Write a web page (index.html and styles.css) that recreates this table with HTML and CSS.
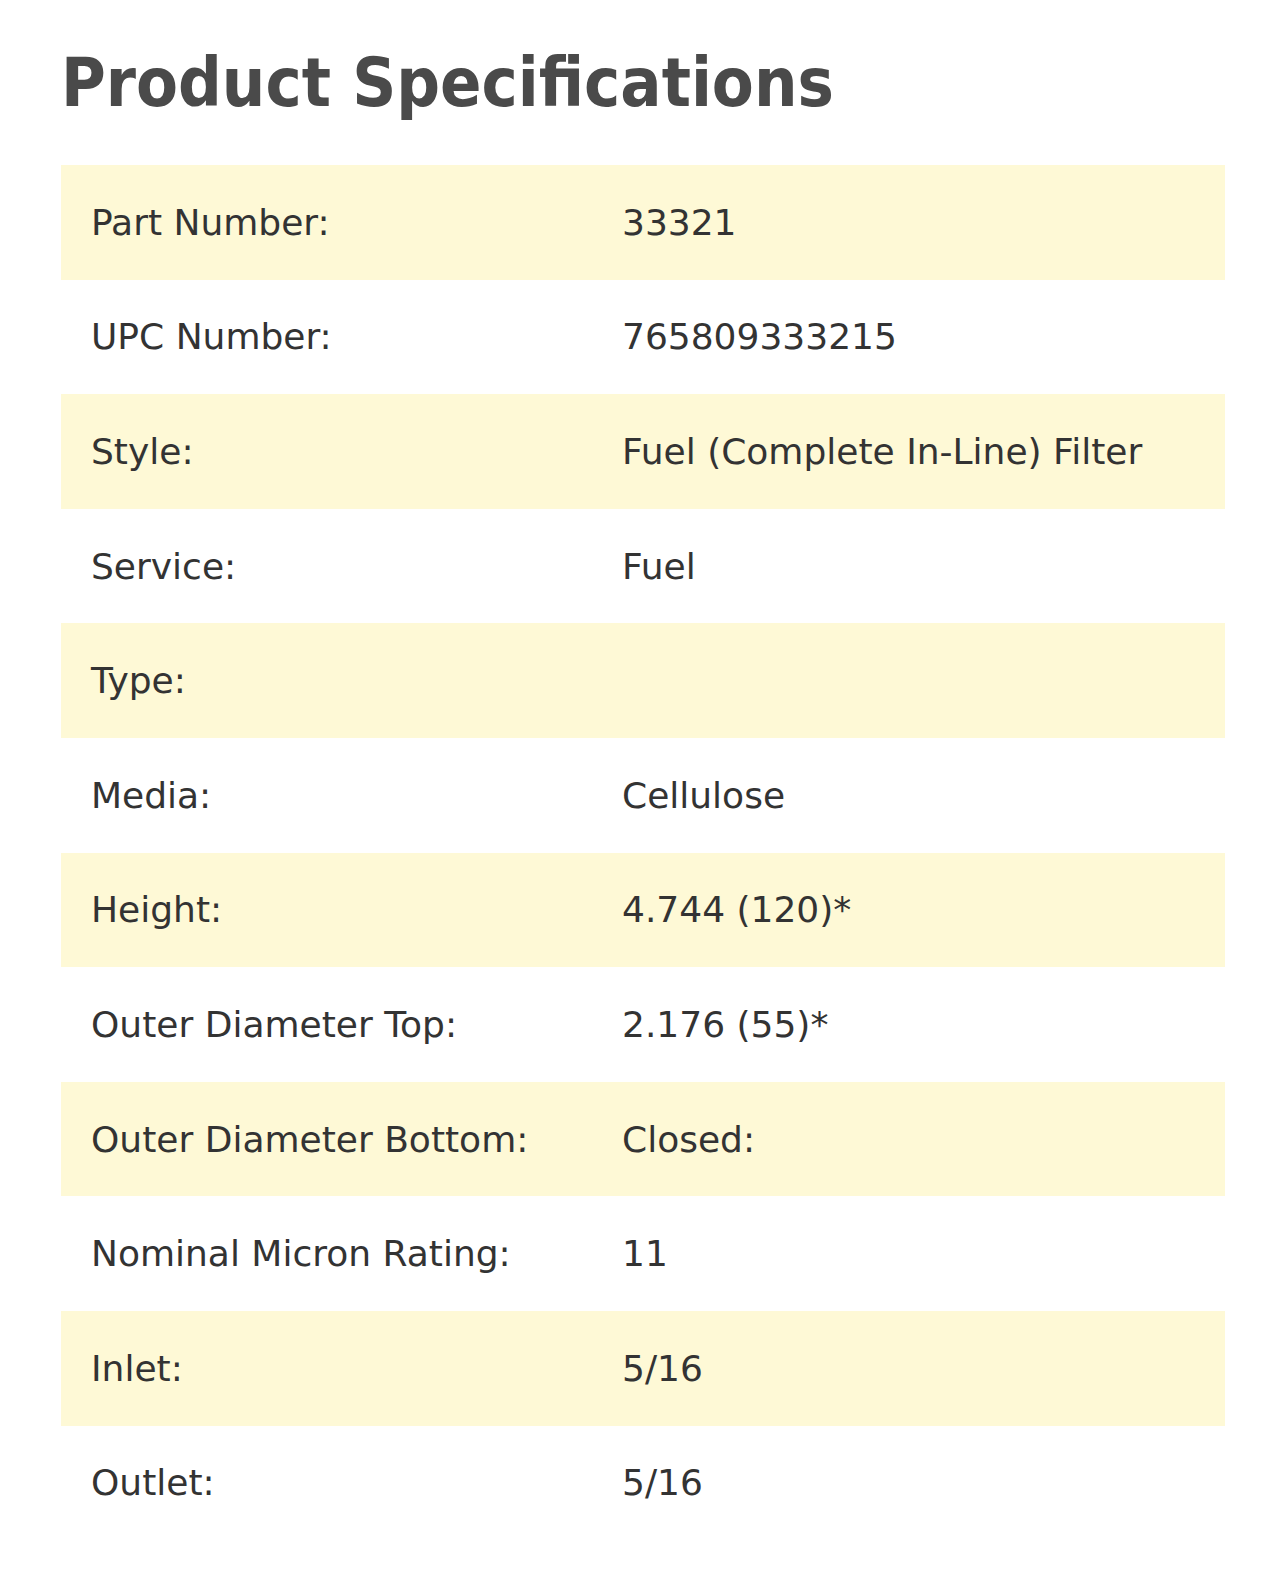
FILE: index.html
```html
<!DOCTYPE html>
<html>
<head>
<meta charset="utf-8">
<link rel="stylesheet" href="styles.css">
</head>
<body>
<section class="specs">
  <h1 class="title">Product Specifications</h1>
  <div class="table">
    <div class="row alt"><div class="label">Part Number:</div><div class="value">33321</div></div>
    <div class="row"><div class="label">UPC Number:</div><div class="value">765809333215</div></div>
    <div class="row alt"><div class="label">Style:</div><div class="value">Fuel (Complete In-Line) Filter</div></div>
    <div class="row"><div class="label">Service:</div><div class="value">Fuel</div></div>
    <div class="row alt"><div class="label">Type:</div><div class="value"></div></div>
    <div class="row"><div class="label">Media:</div><div class="value">Cellulose</div></div>
    <div class="row alt"><div class="label">Height:</div><div class="value">4.744 (120)*</div></div>
    <div class="row"><div class="label">Outer Diameter Top:</div><div class="value">2.176 (55)*</div></div>
    <div class="row alt"><div class="label">Outer Diameter Bottom:</div><div class="value">Closed:</div></div>
    <div class="row"><div class="label">Nominal Micron Rating:</div><div class="value">11</div></div>
    <div class="row alt"><div class="label">Inlet:</div><div class="value">5/16</div></div>
    <div class="row"><div class="label">Outlet:</div><div class="value">5/16</div></div>
  </div>
</section>
</body>
</html>
```

FILE: styles.css
```css
html, body {
  margin: 0;
  padding: 0;
  background: #ffffff;
}
.specs {
  padding: 38px 60px 0 61px;
  width: 1164px;
  font-family: "DejaVu Sans", Verdana, sans-serif;
}
.title {
  margin: 0 0 37px 0;
  font-family: "DejaVu Sans", sans-serif;
  font-stretch: condensed;
  font-weight: bold;
  font-size: 68px;
  line-height: 90px;
  color: #4a4a4a;
}
.table {
  display: flex;
  flex-direction: column;
}
.row {
  display: grid;
  grid-template-columns: 531px 1fr;
  align-items: center;
  height: 114.6px;
  font-size: 36px;
  color: #333333;
}
.row.alt {
  background: #fef9d6;
}
.label {
  padding-left: 30px;
}
.value {
  padding-left: 30px;
}
```
